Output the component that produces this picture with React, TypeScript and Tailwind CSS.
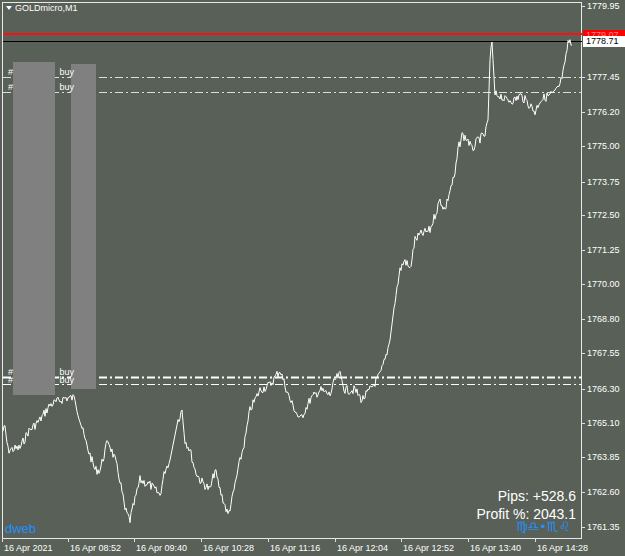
import React from "react";

const keys: [number, number][] = [[2,432],[5,428],[8,450],[20,448],[28,432],[40,420],[50,405],[65,398],[75,398],[78,412],[85,440],[95,470],[100,470],[108,440],[115,460],[120,480],[125,510],[130,520],[135,500],[140,480],[150,485],[160,495],[165,470],[170,460],[178,420],[182,410],[185,440],[190,450],[195,470],[200,480],[210,490],[215,470],[220,490],[228,515],[232,500],[238,470],[245,440],[250,410],[260,390],[270,385],[280,370],[285,385],[290,400],[300,420],[310,400],[320,390],[330,395],[335,380],[340,375],[345,390],[355,390],[362,400],[370,390],[380,375],[385,360],[390,340],[395,300],[400,270],[405,260],[410,270],[415,240],[420,235],[430,230],[440,200],[445,210],[450,190],[455,175],[458,150],[462,135],[468,140],[472,150],[478,140],[485,135],[488,120],[490,60],[492,42],[495,95],[500,95],[505,100],[515,100],[520,95],[530,105],[535,112],[540,100],[550,95],[555,93],[560,85],[565,65],[568,42],[572,45]];

function buildPath() {
  let seed = 7;
  const rnd = () => { seed = (seed * 9301 + 49297) % 233280; return seed / 233280; };
  const pts: string[] = [];
  for (let i = 0; i < keys.length - 1; i++) {
    const [x0, y0] = keys[i]; const [x1, y1] = keys[i + 1];
    for (let x = x0; x < x1; x++) {
      const t = (x - x0) / (x1 - x0);
      const n = Math.abs(y1 - y0) > 30 ? 0 : (rnd() - 0.5) * 9;
      pts.push(`${x},${(y0 + (y1 - y0) * t + n).toFixed(1)}`);
    }
  }
  pts.push("572,45");
  return "M" + pts.join(" L");
}
const path = buildPath();

const prices: [string, number][] = [["1779.95",6],["1777.45",77],["1776.20",112],["1775.00",146],["1773.75",182],["1772.50",215],["1771.25",250],["1770.00",284],["1768.80",319],["1767.55",353],["1766.30",389],["1765.10",423],["1763.85",457],["1762.60",492],["1761.35",527]];
const times: [string, number][] = [["16 Apr 2021",2],["16 Apr 08:52",68],["16 Apr 09:40",134],["16 Apr 10:28",201],["16 Apr 11:16",268],["16 Apr 12:04",335],["16 Apr 12:52",401],["16 Apr 13:40",468],["16 Apr 14:28",535]];

export default function App() {
  return (
    <div className="relative w-[625px] h-[556px] bg-[#596058] overflow-hidden text-[9px] text-white" style={{ fontFamily: "'Liberation Sans', Arial, sans-serif" }}>
      <svg className="absolute left-0 top-0" width="625" height="556">
        <rect x="2.5" y="2.5" width="579" height="536" fill="none" stroke="#e8e8e8" strokeWidth="1" />
        <line x1="3" y1="34" x2="582" y2="34" stroke="#ff1010" strokeWidth="2" />
        <line x1="3" y1="41.5" x2="582" y2="41.5" stroke="#000" strokeWidth="1" />
        <line x1="3" y1="77.5" x2="582" y2="77.5" stroke="#ddd" strokeDasharray="8 3 2 3" />
        <line x1="3" y1="92.5" x2="582" y2="92.5" stroke="#ddd" strokeDasharray="8 3 2 3" />
        <line x1="3" y1="377.5" x2="582" y2="377.5" stroke="#fff" strokeWidth="2" strokeDasharray="8 3 2 3" />
        <line x1="3" y1="384.5" x2="582" y2="384.5" stroke="#fff" strokeDasharray="8 3 2 3" />
        <rect x="13" y="62" width="42" height="333" fill="#808080" />
        <rect x="71" y="64" width="25" height="325" fill="#808080" />
        <path d={path} fill="none" stroke="#fff" strokeWidth="1" />
        {prices.map(([p, y]) => <line key={p} x1="582" x2="585" y1={y + 0.5} y2={y + 0.5} stroke="#ddd" />)}
        {times.map(([t, x]) => <line key={t} x1={x + 0.5} x2={x + 0.5} y1="538" y2="542" stroke="#ddd" />)}
        <path d="M6 6 L12 6 L9 10 Z" fill="#fff" />
      </svg>
      <div className="absolute left-[15px] top-[2px]">GOLDmicro,M1</div>
      <div className="absolute left-[8px] top-[66px] flex w-[80px] justify-between"><span>#</span><span className="mr-[14px]">buy</span></div>
      <div className="absolute left-[8px] top-[81px] flex w-[80px] justify-between"><span>#</span><span className="mr-[14px]">buy</span></div>
      <div className="absolute left-[8px] top-[366px] flex w-[80px] justify-between"><span>#</span><span className="mr-[14px]">buy</span></div>
      <div className="absolute left-[8px] top-[374px] flex w-[80px] justify-between"><span>#</span><span className="mr-[14px]">buy</span></div>
      {prices.map(([p, y]) => <div key={p} className="absolute left-[587px] leading-[12px]" style={{ top: y - 6 }}>{p}</div>)}
      <div className="absolute left-[583px] top-[30px] w-[42px] h-[10px] bg-[#ff0000] leading-[10px] pl-[3px] text-[#ff8080]">1779.07</div>
      <div className="absolute left-[583px] top-[36px] w-[42px] h-[11px] bg-white leading-[11px] pl-[3px] text-black">1778.71</div>
      {times.map(([t, x]) => <div key={t} className="absolute top-[542px] leading-[12px]" style={{ left: x + 2 }}>{t}</div>)}
      <div className="absolute right-[49px] top-[487px] text-right text-[14px] leading-[18px]">
        <div>Pips: +528.6</div>
        <div>Profit %: 2043.1</div>
      </div>
      <div className="absolute left-[516px] top-[520px] text-[13px] text-[#1e90ff] leading-[14px]" style={{ fontFamily: "'DejaVu Sans', sans-serif" }}>♍♎•♏♌</div>
      <div className="absolute left-[5px] top-[519px] text-[13px] text-[#1e90ff]">dweb</div>
    </div>
  );
}
